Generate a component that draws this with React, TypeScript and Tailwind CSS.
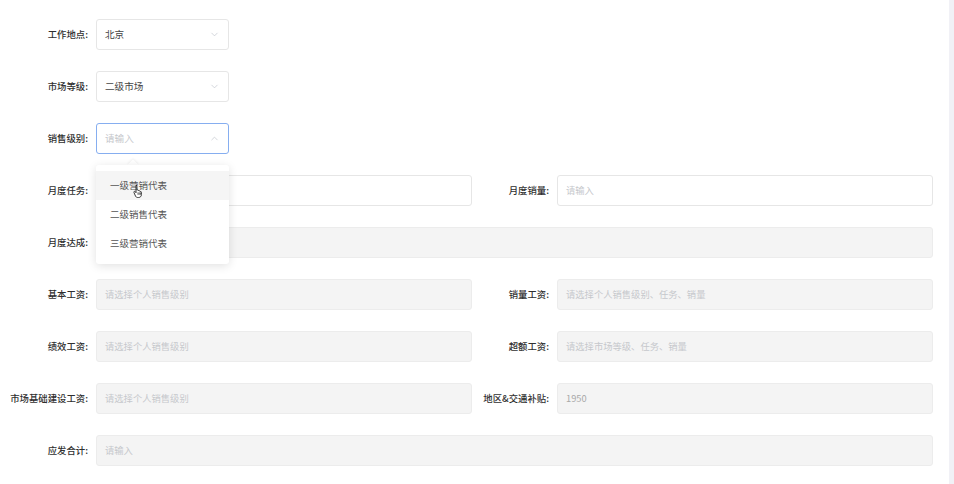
import { ChevronDown, ChevronUp } from "lucide-react";

const font = { fontFamily: '"Noto Sans CJK SC", "Noto Sans", sans-serif' };

function Label({ text, w = "w-[88px]" }: { text: string; w?: string }) {
  return (
    <div className={`${w} shrink-0 text-right text-[9.4px] font-medium text-[#2f2f2f] leading-none`}>
      {text}:
    </div>
  );
}

function Box({
  value,
  placeholder,
  disabled,
  className = "",
}: {
  value?: string;
  placeholder?: string;
  disabled?: boolean;
  className?: string;
}) {
  return (
    <div
      className={`h-[31px] flex items-center px-[8px] rounded-[3px] border text-[9.3px] ${
        disabled ? "bg-[#f4f4f4] border-[#ececec]" : "bg-white border-[#e6e6e6]"
      } ${className}`}
    >
      {value ? (
        <span className={disabled ? "text-[#a8a8a8]" : "text-[#444]"}>{value}</span>
      ) : (
        <span className="text-[#c6c8cc]">{placeholder}</span>
      )}
    </div>
  );
}

function Select({ value, open }: { value?: string; open?: boolean }) {
  return (
    <div
      className={`relative w-[133px] h-[31px] flex items-center justify-between px-[8px] rounded-[3px] border bg-white text-[9.6px] ${
        open ? "border-[#86aef0]" : "border-[#e6e6e6]"
      }`}
    >
      {value ? <span className="text-[#444]">{value}</span> : <span className="text-[#c6c8cc]">请输入</span>}
      {open ? (
        <ChevronUp size={11} strokeWidth={1.5} className="text-[#c0c4cc]" />
      ) : (
        <ChevronDown size={11} strokeWidth={1.5} className="text-[#c0c4cc]" />
      )}
    </div>
  );
}

function Hand() {
  return (
    <svg width="11" height="14" viewBox="0 0 11 14" className="absolute left-[37px] top-[13px]">
      <path
        d="M3 1.2c.5 0 .9.4.9.9V6l.2-.1c.5-.2 1 .1 1.1.5.5-.2 1 .1 1.1.5.5-.2 1 .1 1.1.6.6-.1 1 .3 1 .8v2.4c0 1.6-1.2 2.8-2.8 2.8H4.6c-.9 0-1.6-.5-2-1.2L1 8.6c-.3-.5-.1-1 .3-1.2.4-.2.8 0 1 .3l.7 1V2.1c0-.5.4-.9.9-.9z"
        fill="#fff"
        stroke="#222"
        strokeWidth="0.9"
      />
      <path d="M5 8.4v2.4M6.2 8.4v2.4M7.4 8.4v2.4" stroke="#222" strokeWidth="0.7" />
    </svg>
  );
}

function Dropdown() {
  const items = ["一级营销代表", "二级销售代表", "三级营销代表"];
  return (
    <div className="absolute left-0 top-[42px] w-[133px] z-10">
      <div className="absolute left-[33px] -top-[4px] w-[8px] h-[8px] rotate-45 bg-white shadow-[-1px_-1px_2px_rgba(0,0,0,0.05)]" />
      <div className="relative bg-white rounded-[3px] shadow-[0_2px_10px_rgba(0,0,0,0.12)] py-[6px]">
        {items.map((t, i) => (
          <div
            key={t}
            className={`relative h-[29px] flex items-center pl-[14px] text-[9.5px] text-[#555] ${
              i === 0 ? "bg-[#f5f5f5]" : ""
            }`}
          >
            {t}
            {i === 0 && <Hand />}
          </div>
        ))}
      </div>
    </div>
  );
}

export default function App() {
  return (
    <div className="min-h-screen w-full flex bg-white" style={font}>
      <div className="flex-1 pt-[19px] pr-[16px] flex flex-col gap-[21px]">
        <div className="flex items-center">
          <Label text="工作地点" />
          <div className="ml-[8px]">
            <Select value="北京" />
          </div>
        </div>
        <div className="flex items-center">
          <Label text="市场等级" />
          <div className="ml-[8px]">
            <Select value="二级市场" />
          </div>
        </div>
        <div className="flex items-center relative z-10">
          <Label text="销售级别" />
          <div className="ml-[8px] relative">
            <Select open />
            <Dropdown />
          </div>
        </div>
        <div className="flex items-center">
          <Label text="月度任务" />
          <Box placeholder="请输入" className="ml-[8px] w-[376px]" />
          <Label text="月度销量" w="w-[77px]" />
          <Box placeholder="请输入" className="ml-[8px] flex-1" />
        </div>
        <div className="flex items-center">
          <Label text="月度达成" />
          <Box disabled className="ml-[8px] flex-1" />
        </div>
        <div className="flex items-center">
          <Label text="基本工资" />
          <Box disabled placeholder="请选择个人销售级别" className="ml-[8px] w-[376px]" />
          <Label text="销量工资" w="w-[77px]" />
          <Box disabled placeholder="请选择个人销售级别、任务、销量" className="ml-[8px] flex-1" />
        </div>
        <div className="flex items-center">
          <Label text="绩效工资" />
          <Box disabled placeholder="请选择个人销售级别" className="ml-[8px] w-[376px]" />
          <Label text="超额工资" w="w-[77px]" />
          <Box disabled placeholder="请选择市场等级、任务、销量" className="ml-[8px] flex-1" />
        </div>
        <div className="flex items-center">
          <Label text="市场基础建设工资" />
          <Box disabled placeholder="请选择个人销售级别" className="ml-[8px] w-[376px]" />
          <Label text="地区&交通补贴" w="w-[77px]" />
          <Box disabled value="1950" className="ml-[8px] flex-1" />
        </div>
        <div className="flex items-center">
          <Label text="应发合计" />
          <Box disabled placeholder="请输入" className="ml-[8px] flex-1" />
        </div>
      </div>
      <div className="w-[5px] shrink-0 bg-[#f1f1f6]" />
    </div>
  );
}
